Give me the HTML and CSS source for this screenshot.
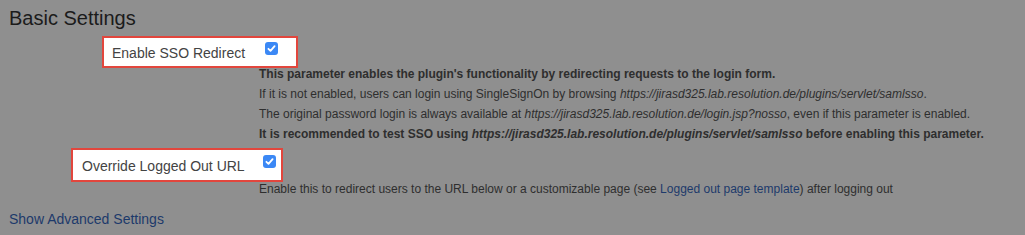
FILE: index.html
```html
<!DOCTYPE html>
<html>
<head>
<meta charset="utf-8">
<link rel="stylesheet" href="styles.css">
</head>
<body>
<div class="page">
  <h2 class="title">Basic Settings</h2>
  <div class="field">
    <div class="hl hl-sso">
      <span class="label">Enable SSO Redirect</span>
      <span class="check"><svg width="13" height="13" viewBox="0 0 13 13"><rect x="0" y="0" width="13" height="13" rx="3" fill="#3b88f5"/><path d="M3.4 6.8 L5.5 8.9 L9.6 4.2" fill="none" stroke="#fff" stroke-width="1.8" stroke-linecap="round" stroke-linejoin="round"/></svg></span>
    </div>
  </div>
  <div class="desc desc-sso">
    <div class="b">This parameter enables the plugin's functionality by redirecting requests to the login form.</div>
    <div>If it is not enabled, users can login using SingleSignOn by browsing <i>https://jirasd325.lab.resolution.de/plugins/servlet/samlsso</i>.</div>
    <div>The original password login is always available at <i>https://jirasd325.lab.resolution.de/login.jsp?nosso</i>, even if this parameter is enabled.</div>
    <div class="b">It is recommended to test SSO using <i>https://jirasd325.lab.resolution.de/plugins/servlet/samlsso</i> before enabling this parameter.</div>
  </div>
  <div class="field">
    <div class="hl hl-logout">
      <span class="label">Override Logged Out URL</span>
      <span class="check"><svg width="13" height="13" viewBox="0 0 13 13"><rect x="0" y="0" width="13" height="13" rx="3" fill="#3b88f5"/><path d="M3.4 6.8 L5.5 8.9 L9.6 4.2" fill="none" stroke="#fff" stroke-width="1.8" stroke-linecap="round" stroke-linejoin="round"/></svg></span>
    </div>
  </div>
  <div class="desc desc-logout">Enable this to redirect users to the URL below or a customizable page (see <a class="link" href="#">Logged out page template</a>) after logging out</div>
  <a class="advanced" href="#">Show Advanced Settings</a>
</div>
</body>
</html>
```

FILE: styles.css
```css
html, body {
  margin: 0;
  padding: 0;
  background: #8f8f8f;
  font-family: "Liberation Sans", Arial, sans-serif;
}
.page {
  padding: 4px 9px 0 9px;
}
.title {
  margin: 0;
  font-size: 20px;
  font-weight: normal;
  line-height: 28px;
  color: #1b1b1b;
}
.field {
  display: flex;
}
.hl {
  display: flex;
  align-items: center;
  background: #fff;
  border: 2px solid #e2463d;
  box-sizing: border-box;
}
.hl-sso {
  margin-left: 93px;
  margin-top: 4px;
  width: 196px;
  height: 32px;
  padding-left: 8px;
}
.hl-logout {
  margin-left: 62px;
  margin-top: 0;
  width: 212px;
  height: 34px;
  padding-left: 9px;
}
.label {
  font-size: 14px;
  color: #434343;
  padding-top: 2px;
}
.hl-sso .check { margin-left: 20px; margin-top: -8px; }
.hl-logout .check { margin-left: 18px; margin-top: -8px; }
.check svg { display: block; }
.desc {
  margin-left: 250px;
  font-size: 12px;
  line-height: 20px;
  color: #2e2e2e;
}
.desc-sso {
  margin-top: -4px;
  margin-bottom: 4px;
}
.desc-logout {
  margin-top: -3px;
}
.b { font-weight: bold; }
.link { color: #1d3a6b; text-decoration: none; }
.advanced {
  display: inline-block;
  margin-top: 12px;
  font-size: 14px;
  color: #1d3a6b;
  text-decoration: none;
}
```
